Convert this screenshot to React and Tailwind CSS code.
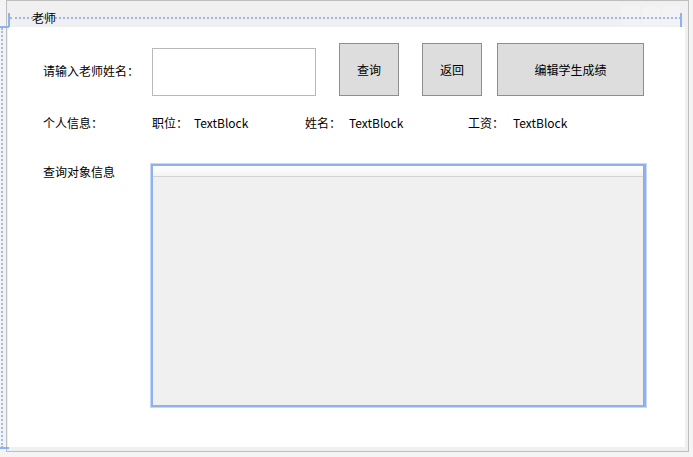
// App.jsx - WPF designer view: 老师 window
export default function App() {
  return (
    <div className="relative w-[693px] h-[457px] overflow-hidden bg-[#f4f4f4] text-[12px] leading-[16px] text-black font-['Microsoft_YaHei','Noto_Sans_CJK_SC',sans-serif]">
      {/* designer adornments on the left */}
      <div className="absolute left-[1px] top-[28px] h-[420px] border-l-2 border-dotted border-[#9dbcf0]" />
      <div className="absolute left-0 top-[26px] w-[9px] h-[2px] bg-[#8fb2ef]" />
      <div className="absolute left-0 top-[447px] w-[9px] h-[2px] bg-[#8fb2ef]" />

      {/* window frame */}
      <div className="ml-[6px] w-[683px] h-[452px] border border-[#bdbdbd] bg-[#f0f0f0] flex flex-col">
        {/* title strip */}
        <div className="relative h-[26px] shrink-0">
          <div className="absolute left-[615px] top-[5px] flex gap-[2px]">
            <div className="w-[18px] h-[19px] bg-[#f3f3f3]" />
            <div className="w-[18px] h-[19px] bg-[#f3f3f3]" />
            <div className="w-[18px] h-[19px] bg-[#f3f3f3]" />
          </div>
          <div className="absolute left-[1px] top-[12px] w-[2px] h-[14px] bg-[#8fb2ef]" />
          <div className="absolute left-[3px] top-[16px] w-[671px] border-t-2 border-dotted border-[#98b8f0]" />
          <div className="absolute left-[673px] top-[12px] w-[2px] h-[14px] bg-[#8fb2ef]" />
          <span className="absolute left-[25px] top-[9px]">老师</span>
        </div>

        {/* client area */}
        <div className="ml-[1px] w-[677px] h-[420px] bg-white pl-[35px] pt-[16px] flex flex-col">
          {/* search row */}
          <div className="flex items-start">
            <div className="w-[109px] mt-[20px]">请输入老师姓名：</div>
            <div className="w-[164px] h-[48px] mt-[5px] border border-[#b8b8b8] bg-white" />
            <button className="ml-[23px] w-[60px] h-[53px] border border-[#8e8e8e] bg-[#dddddd]">查询</button>
            <button className="ml-[23px] w-[60px] h-[53px] border border-[#8e8e8e] bg-[#dddddd]">返回</button>
            <button className="ml-[15px] w-[147px] h-[53px] border border-[#8e8e8e] bg-[#dddddd]">编辑学生成绩</button>
          </div>

          {/* info row */}
          <div className="flex mt-[19px]">
            <div className="w-[109px]">个人信息：</div>
            <div className="w-[42px]">职位：</div>
            <div className="w-[111px]">TextBlock</div>
            <div className="w-[44px]">姓名：</div>
            <div className="w-[119px]">TextBlock</div>
            <div className="w-[45px]">工资：</div>
            <div>TextBlock</div>
          </div>

          {/* result grid */}
          <div className="flex items-start mt-[32px]">
            <div className="w-[107px] mt-[1px]">查询对象信息</div>
            <div className="w-[497px] h-[245px] border border-[#c6d8f6]">
              <div className="w-full h-full border-2 border-[#8fb2ef] flex flex-col">
                <div className="flex-1 flex flex-col border-r border-[#a8a8a8]">
                  <div className="h-[11px] bg-[linear-gradient(#ffffff,#f3f3f3)] border-b border-[#d3d3d3]" />
                  <div className="flex-1 bg-[#f0f0f0]" />
                </div>
              </div>
            </div>
          </div>
        </div>
      </div>
    </div>
  )
}
